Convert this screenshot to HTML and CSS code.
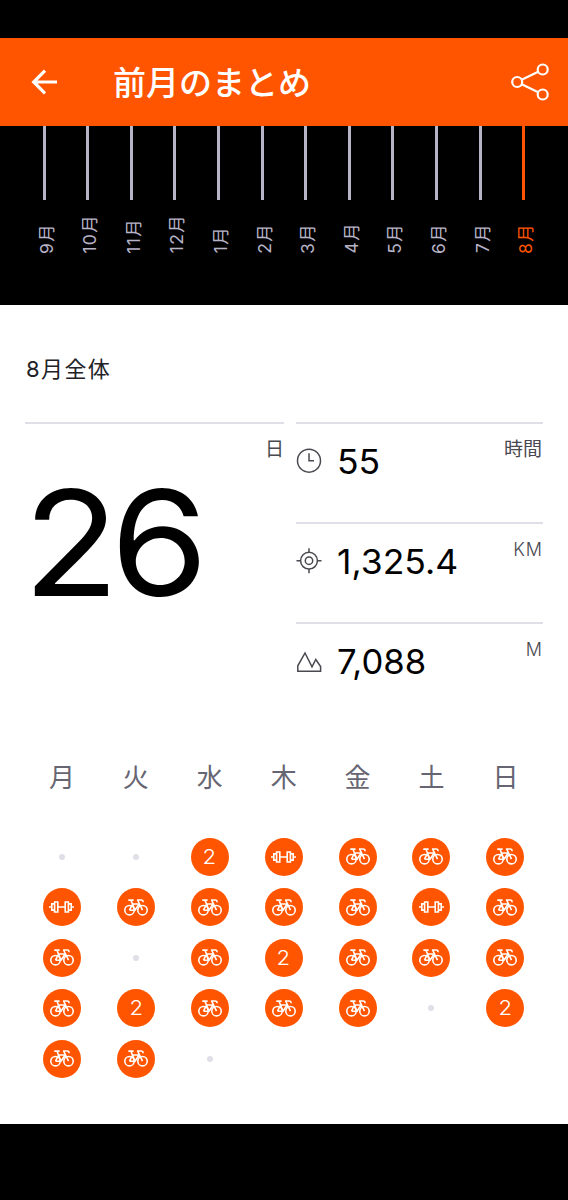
FILE: index.html
```html
<!DOCTYPE html>
<html lang="ja">
<head>
<meta charset="utf-8">
<meta name="viewport" content="width=device-width">
<title>前月のまとめ</title>
<link rel="stylesheet" href="styles.css">
</head>
<body>
<svg class="sprite" aria-hidden="true">
  <symbol id="bike" viewBox="0 0 24 17">
    <g fill="none" stroke="currentColor" stroke-width="1.6" stroke-linejoin="round">
      <circle cx="5.5" cy="11.2" r="4.7"/>
      <circle cx="18.5" cy="11.2" r="4.7"/>
      <path d="M5.5 11.2 8.6 5H15.2L11 11.2H5.5M11 11.2 7 1.2M4.3 1.1H9.6M18.5 11.2 13.6 1H17.1C18.6 1 19.2 1.9 18.9 3.2"/>
    </g>
  </symbol>
  <symbol id="dumbbell" viewBox="0 0 25 12">
    <g fill="none" stroke="currentColor" stroke-width="1.6">
      <path d="M5.6 1H8.8V11H5.6ZM16.2 1H19.4V11H16.2ZM8.8 6H16.2M5.6 2.9H2.8V9.1H5.6M19.4 2.9H22.2V9.1H19.4M0 6H2.8M22.2 6H25"/>
    </g>
  </symbol>
</svg>
<div class="status-bar"></div>
<header class="app-bar">
  <svg class="back" viewBox="0 0 28 26"><path d="M27 13H4M15 1.7 3.7 13 15 24.3" fill="none" stroke="currentColor" stroke-width="3.2"/></svg>
  <h1 class="title">前月のまとめ</h1>
  <svg class="share" viewBox="0 0 38 38"><g fill="none" stroke="currentColor" stroke-width="2.2"><circle cx="6.2" cy="19" r="5"/><circle cx="31.7" cy="6.5" r="5"/><circle cx="31.7" cy="31.5" r="5"/><path d="M10.7 16.7 27.2 8.7M10.7 21.3 27.2 29.3"/></g></svg>
</header>
<nav class="months">
  <div class="month"><i class="bar"></i><span class="month-name">9月</span></div>
  <div class="month"><i class="bar"></i><span class="month-name">10月</span></div>
  <div class="month"><i class="bar"></i><span class="month-name">11月</span></div>
  <div class="month"><i class="bar"></i><span class="month-name">12月</span></div>
  <div class="month"><i class="bar"></i><span class="month-name">1月</span></div>
  <div class="month"><i class="bar"></i><span class="month-name">2月</span></div>
  <div class="month"><i class="bar"></i><span class="month-name">3月</span></div>
  <div class="month"><i class="bar"></i><span class="month-name">4月</span></div>
  <div class="month"><i class="bar"></i><span class="month-name">5月</span></div>
  <div class="month"><i class="bar"></i><span class="month-name">6月</span></div>
  <div class="month"><i class="bar"></i><span class="month-name">7月</span></div>
  <div class="month current"><i class="bar"></i><span class="month-name">8月</span></div>
</nav>
<main class="summary">
  <h2 class="heading">8月全体</h2>
  <section class="stats">
    <div class="days"><span class="unit">日</span><strong class="days-value">26</strong></div>
    <div class="metrics">
      <div class="metric">
        <svg class="metric-icon" viewBox="0 0 26 26"><g fill="none" stroke="currentColor" stroke-width="1.5"><circle cx="13" cy="12.7" r="11.5"/><path d="M13 5.2V12.7H18"/></g></svg>
        <span class="value">55</span><span class="unit">時間</span>
      </div>
      <div class="metric">
        <svg class="metric-icon" viewBox="0 0 26 26"><g fill="none" stroke="currentColor" stroke-width="1.5"><circle cx="13" cy="12.7" r="8.4"/><circle cx="13" cy="12.7" r="3.7"/><path d="M13 .2V4.3M13 21.1V25.2M.5 12.7H4.6M21.4 12.7H25.5"/></g></svg>
        <span class="value distance">1,325.4</span><span class="unit latin">KM</span>
      </div>
      <div class="metric">
        <svg class="metric-icon" viewBox="0 0 26 26"><path d="M1.8 23.3V17.8L9 5 16 18.8 19.8 11.5 24.6 18.6V23.3Z" fill="none" stroke="currentColor" stroke-width="1.5"/></svg>
        <span class="value elevation">7,088</span><span class="unit latin">M</span>
      </div>
    </div>
  </section>
  <div class="week-names"><span>月</span><span>火</span><span>水</span><span>木</span><span>金</span><span>土</span><span>日</span></div>
  <div class="calendar">
    <i class="rest"></i>
    <i class="rest"></i>
    <span class="day"><b class="count">2</b></span>
    <span class="day"><svg class="dumbbell"><use href="#dumbbell"/></svg></span>
    <span class="day"><svg class="bike"><use href="#bike"/></svg></span>
    <span class="day"><svg class="bike"><use href="#bike"/></svg></span>
    <span class="day"><svg class="bike"><use href="#bike"/></svg></span>

    <span class="day"><svg class="dumbbell"><use href="#dumbbell"/></svg></span>
    <span class="day"><svg class="bike"><use href="#bike"/></svg></span>
    <span class="day"><svg class="bike"><use href="#bike"/></svg></span>
    <span class="day"><svg class="bike"><use href="#bike"/></svg></span>
    <span class="day"><svg class="bike"><use href="#bike"/></svg></span>
    <span class="day"><svg class="dumbbell"><use href="#dumbbell"/></svg></span>
    <span class="day"><svg class="bike"><use href="#bike"/></svg></span>

    <span class="day"><svg class="bike"><use href="#bike"/></svg></span>
    <i class="rest"></i>
    <span class="day"><svg class="bike"><use href="#bike"/></svg></span>
    <span class="day"><b class="count">2</b></span>
    <span class="day"><svg class="bike"><use href="#bike"/></svg></span>
    <span class="day"><svg class="bike"><use href="#bike"/></svg></span>
    <span class="day"><svg class="bike"><use href="#bike"/></svg></span>

    <span class="day"><svg class="bike"><use href="#bike"/></svg></span>
    <span class="day"><b class="count">2</b></span>
    <span class="day"><svg class="bike"><use href="#bike"/></svg></span>
    <span class="day"><svg class="bike"><use href="#bike"/></svg></span>
    <span class="day"><svg class="bike"><use href="#bike"/></svg></span>
    <i class="rest"></i>
    <span class="day"><b class="count">2</b></span>

    <span class="day"><svg class="bike"><use href="#bike"/></svg></span>
    <span class="day"><svg class="bike"><use href="#bike"/></svg></span>
    <i class="rest"></i>
  </div>
</main>
</body>
</html>
```

FILE: styles.css
```css
* { box-sizing: border-box; }
body {
  margin: 0;
  height: 1200px;
  background: #000;
  color: #000;
  font-family: Inter, "Noto Sans CJK JP", sans-serif;
  overflow: hidden;
}
.sprite { display: none; }
.status-bar { height: 38px; }
.app-bar {
  display: flex;
  align-items: center;
  height: 88px;
  padding: 0 19px 0 30px;
  background: #ff5500;
  color: #fff;
}
.back { width: 28px; height: 26px; }
.title {
  margin: 1px 0 0 55px;
  font-size: 33px;
  line-height: 48px;
  font-weight: 500;
}
.share { width: 38px; height: 38px; margin-left: auto; }

.months {
  display: grid;
  grid-template-columns: repeat(12, 43.6px);
  height: 178.5px;
  padding-left: 22.4px;
  color: #b8b4c8;
}
.month { display: flex; flex-direction: column; align-items: center; height: 127.5px; }
.month.current { color: #ff5500; }
.bar { flex: none; width: 3px; height: 73.5px; background: currentColor; }
.month-name {
  margin: auto 0 0 5px;
  writing-mode: vertical-rl;
  text-orientation: sideways;
  transform: rotate(180deg);
  font-size: 17.5px;
  line-height: 24px;
  letter-spacing: 1.3px;
}

.summary { height: 819.5px; padding: 47.5px 25px 0; background: #fff; }
.heading {
  margin: 0;
  padding-left: 1px;
  font-size: 22px;
  line-height: 34px;
  font-weight: 400;
  letter-spacing: 1.4px;
  color: #222226;
}
.stats { display: grid; grid-template-columns: 259px 247px; gap: 12px; margin-top: 36px; }
.days, .metric { border-top: 2px solid #dfdfe8; }
.days { display: flex; flex-direction: column; }
.unit {
  color: #494950;
  font-size: 19px;
  line-height: 28px;
}
.unit.latin { font-size: 18px; font-weight: 300; letter-spacing: 1px; }
.days .unit { align-self: flex-end; margin-top: 12px; }
.days-value {
  align-self: flex-start;
  margin: 4px 0 0 -2px;
  font-size: 146px;
  line-height: 150px;
  font-weight: 400;
  letter-spacing: -8px;
  transform: scaleX(1.08);
  transform-origin: left;
}
.metric { display: flex; align-items: flex-start; height: 100px; }
.metric-icon { width: 26px; height: 26px; margin-top: 24px; color: #494950; }
.value {
  margin: 18px 0 0 15px;
  font-size: 34px;
  line-height: 40px;
  transform: scaleX(1.045);
  transform-origin: left;
}
.elevation { transform: scaleX(1.02); }
.metric .unit { margin: 12px 1px 0 auto; }
.metric .unit.latin { margin-right: 0; }

.week-names, .calendar {
  display: grid;
  grid-template-columns: repeat(7, 73.92px);
  justify-items: center;
}
.week-names { margin-top: 37px; font-size: 26px; line-height: 38px; color: #666572; }
.calendar { grid-auto-rows: 50.5px; margin-top: 34.7px; align-items: center; }
.day {
  display: flex;
  align-items: center;
  justify-content: center;
  width: 38px;
  height: 38px;
  border-radius: 50%;
  background: #ff5500;
  color: #fff;
}
.count {
  font-size: 20.5px;
  line-height: 24px;
  font-weight: 300;
  transform: scaleX(1.08);
}
.bike { width: 24px; height: 17px; }
.dumbbell { width: 25px; height: 12px; }
.rest { width: 6px; height: 6px; border-radius: 50%; background: #dfdfe8; }
```
